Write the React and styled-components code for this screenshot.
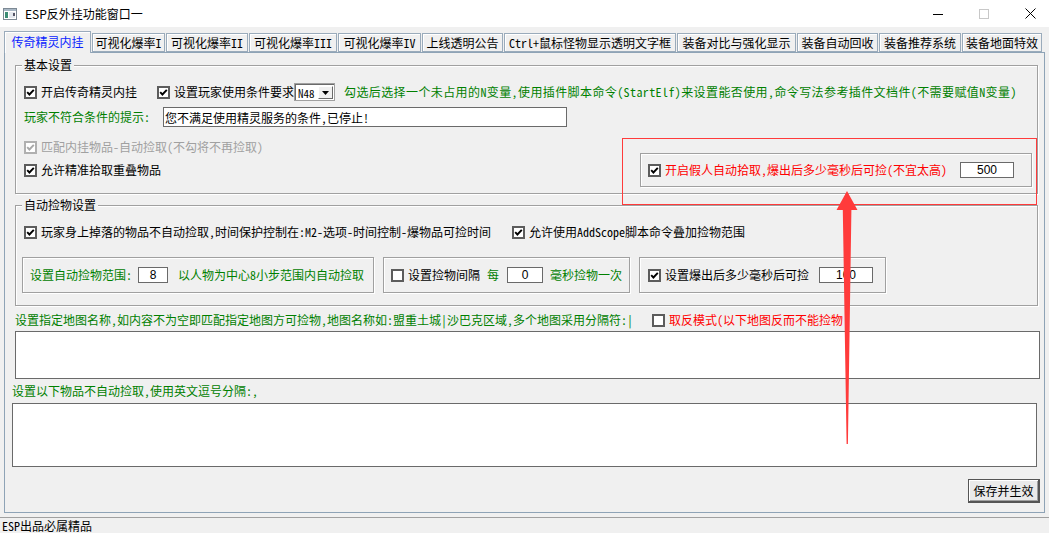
import React from 'react';
import styled, { createGlobalStyle } from 'styled-components';

const FONT = `"Noto Sans CJK SC", "Noto Sans", sans-serif`;

const Global = createGlobalStyle`
  html, body { margin: 0; padding: 0; background: #f0f0f0; }
  body { font-family: ${FONT}; font-size: 12px; color: #000; }
  * { box-sizing: border-box; }
`;

const Window = styled.div`
  position: relative;
  width: 1049px;
  height: 533px;
  overflow: hidden;
  background: #f0f0f0;
  display: flex;
  flex-direction: column;
  font-family: ${FONT};
  font-size: 12px;
  line-height: 14px;
  font-feature-settings: "hwid" 1;
`;

const TitleBar = styled.div`
  flex: none;
  height: 27px;
  background: #fff;
  display: flex;
  align-items: center;
  padding-left: 3px;
  font-feature-settings: normal;
`;

const TitleText = styled.span`
  margin-left: 8px;
  font-size: 12px;
  color: #000;
`;

const Controls = styled.div`
  margin-left: auto;
  margin-right: -4px;
  height: 100%;
  display: flex;
`;

const CtrlBtn = styled.div`
  width: 46px;
  height: 100%;
  display: flex;
  align-items: center;
  justify-content: center;
`;

const TabStrip = styled.div`
  flex: none;
  position: relative;
  z-index: 1;
  height: 26px;
  margin-bottom: -1px;
  padding-left: 4px;
  display: flex;
  align-items: flex-end;
`;

const Tab = styled.div`
  flex: none;
  width: ${(p) => p.$w}px;
  height: ${(p) => (p.$active ? 22 : 19)}px;
  margin-right: 1px;
  margin-bottom: ${(p) => (p.$active ? 0 : 1)}px;
  border: 1px solid #9aabbb;
  border-bottom: ${(p) => (p.$active ? 'none' : '1px solid #9aabbb')};
  box-shadow: inset 1px 1px 0 #fff;
  background: #f0f0f0;
  color: ${(p) => (p.$active ? '#0a1eff' : '#000')};
  display: flex;
  align-items: center;
  justify-content: center;
  white-space: nowrap;
  padding-bottom: ${(p) => (p.$active ? 1 : 0)}px;
`;

const Panel = styled.div`
  flex: none;
  margin-left: 4px;
  width: 1041px;
  height: 461px;
  border: 1px solid #8ea3b6;
  display: flex;
  flex-direction: column;
`;

const Group = styled.div`
  flex: none;
  margin: ${(p) => p.$mt}px 0 0 10px;
  width: 1023px;
  height: ${(p) => p.$h}px;
  border: 1px solid #a0a0a0;
  box-shadow: inset 1px 1px 0 #fff, 1px 1px 0 #fff;
  padding: 0 6px 0 8px;
  display: flex;
  flex-direction: column;
`;

const Caption = styled.div`
  align-self: flex-start;
  margin: -8px 0 0 -2px;
  padding: 0 2px;
  height: 14px;
  line-height: 14px;
  background: #f0f0f0;
`;

const Row = styled.div`
  flex: none;
  display: flex;
  align-items: center;
  height: ${(p) => p.$h || 20}px;
  margin-top: ${(p) => p.$mt || 0}px;
  margin-left: ${(p) => p.$ml || 0}px;
  white-space: nowrap;
`;

const SplitBlock = styled.div`
  flex: none;
  margin-top: ${(p) => p.$mt}px;
  display: flex;
  align-items: flex-start;
`;

const Column = styled.div`
  display: flex;
  flex-direction: column;
`;

const InnerBox = styled.div`
  flex: none;
  margin: ${(p) => p.$mt || 0}px ${(p) => p.$mr || 0}px 0 ${(p) => (p.$ml == null ? 'auto' : p.$ml + 'px')};
  width: ${(p) => p.$w}px;
  height: ${(p) => p.$h}px;
  border: 1px solid #a0a0a0;
  box-shadow: inset 1px 1px 0 #fff, 1px 1px 0 #fff;
  padding-left: ${(p) => p.$pl}px;
  display: flex;
  align-items: center;
  white-space: nowrap;
`;

const BoxRow = styled.div`
  flex: none;
  margin: ${(p) => p.$mt}px 0 0 -2px;
  display: flex;
  gap: 9px;
`;

const Text = styled.span`
  flex: none;
  color: ${(p) => p.$color || '#000'};
  margin-left: ${(p) => p.$ml || 0}px;
  width: ${(p) => (p.$w ? p.$w + 'px' : 'auto')};
  letter-spacing: ${(p) => p.$ls || 0}px;
  white-space: nowrap;
`;

const CheckLabel = styled.label`
  flex: none;
  display: inline-flex;
  align-items: center;
  gap: 4px;
  color: ${(p) => (p.$disabled ? '#a0a0a0' : p.$color || '#000')};
  width: ${(p) => (p.$w ? p.$w + 'px' : 'auto')};
  white-space: nowrap;
`;

const Box = styled.span`
  flex: none;
  width: 13px;
  height: 13px;
  border: 2px solid ${(p) => (p.$disabled ? '#b0b0b0' : '#5c5c5c')};
  background: #fff;
  display: flex;
  align-items: center;
  justify-content: center;
`;

const Field = styled.input`
  flex: none;
  width: ${(p) => p.$w}px;
  height: ${(p) => p.$h}px;
  margin-left: ${(p) => p.$ml || 0}px;
  border: 1px solid #6a6a6a;
  background: #fff;
  padding: 0 ${(p) => (p.$center ? 0 : 1)}px;
  text-align: ${(p) => (p.$center ? 'center' : 'left')};
  font-family: ${(p) => (p.$center ? `"Liberation Sans", Arial, sans-serif` : FONT)};
  font-size: 12px;
  font-feature-settings: "hwid" 1;
  color: #000;
  outline: none;
`;

const Combo = styled.div`
  flex: none;
  width: 41px;
  height: 18px;
  border: 1px solid #a0a0a0;
  box-shadow: inset 1px 1px 0 #6a6a6a;
  background: #fff;
  display: flex;
  padding: 2px 1px 1px 3px;
`;

const ComboText = styled.span`
  flex: 1;
  display: flex;
  align-items: center;
  font-size: 11px;
`;

const ComboBtn = styled.span`
  width: 15px;
  background: #f0f0f0;
  border: 1px solid;
  border-color: #fff #6a6a6a #6a6a6a #fff;
  display: flex;
  align-items: center;
  justify-content: center;
`;

const Area = styled.textarea`
  flex: none;
  display: block;
  margin: ${(p) => p.$mt}px 0 0 ${(p) => p.$ml}px;
  width: 1025px;
  height: ${(p) => p.$h}px;
  border: 1px solid #6a6a6a;
  background: #fff;
  resize: none;
  outline: none;
  font-family: ${FONT};
`;

const Button = styled.button`
  flex: none;
  align-self: flex-end;
  margin: 12px 4px 0 0;
  width: 72px;
  height: 24px;
  border: 1px solid #555;
  border-right-width: 2px;
  border-bottom-width: 2px;
  box-shadow: inset 1px 1px 0 #fff, inset -1px -1px 0 #a0a0a0;
  background: #eaeaea;
  font-family: ${FONT};
  font-size: 12px;
  color: #000;
  padding: 0;
`;

const StatusBar = styled.div`
  flex: 1;
  margin-top: 4px;
  border-top: 1px solid #a0a0a0;
  padding-left: 2px;
  display: flex;
  align-items: center;
`;

const Annotation = styled.div`
  position: absolute;
  left: 622px;
  top: 138px;
  width: 415px;
  height: 67px;
  border: 1px solid #ff3b3b;
  pointer-events: none;
`;

const ArrowWrap = styled.svg`
  position: absolute;
  left: 832px;
  top: 188px;
  pointer-events: none;
`;

const GREEN = '#008000';
const RED = '#ff0000';

function CheckMark({ disabled }) {
  return (
    <svg width="9" height="9" viewBox="0 0 9 9">
      <path d="M1.2 4.2 L3.4 6.5 L7.8 1.8" fill="none" stroke={disabled ? '#a8a8a8' : '#000'} strokeWidth="1.9" />
    </svg>
  );
}

function Check({ checked = true, disabled, color, w, children }) {
  return (
    <CheckLabel $color={color} $w={w} $disabled={disabled}>
      <Box $disabled={disabled}>{checked && <CheckMark disabled={disabled} />}</Box>
      <span>{children}</span>
    </CheckLabel>
  );
}

const tabs = [
  { label: '传奇精灵内挂', w: 87, active: true },
  { label: '可视化爆率I', w: 73 },
  { label: '可视化爆率II', w: 82 },
  { label: '可视化爆率III', w: 88 },
  { label: '可视化爆率IV', w: 83 },
  { label: '上线透明公告', w: 81 },
  { label: 'Ctrl+鼠标怪物显示透明文字框', w: 172 },
  { label: '装备对比与强化显示', w: 119 },
  { label: '装备自动回收', w: 81 },
  { label: '装备推荐系统', w: 82 },
  { label: '装备地面特效', w: 80 },
];

export default function App() {
  return (
    <>
      <Global />
      <Window>
        <TitleBar>
          <svg width="14" height="12" viewBox="0 0 14 12">
            <rect x="0.5" y="0.5" width="13" height="11" fill="#fff" stroke="#7d8994" />
            <rect x="1" y="1" width="12" height="2" fill="#a9b8c6" />
            <rect x="2" y="4" width="3" height="6" fill="#3c8c74" />
            <rect x="6" y="4" width="6" height="6" fill="#e4e8ee" />
            <rect x="10" y="5" width="2" height="3" fill="#556" />
          </svg>
          <TitleText>ESP反外挂功能窗口一</TitleText>
          <Controls>
            <CtrlBtn>
              <svg width="10" height="10" viewBox="0 0 10 10">
                <line x1="0" y1="5.5" x2="10" y2="5.5" stroke="#000" strokeWidth="1" />
              </svg>
            </CtrlBtn>
            <CtrlBtn>
              <svg width="10" height="10" viewBox="0 0 10 10">
                <rect x="0.5" y="0.5" width="9" height="9" fill="none" stroke="#c8c8c8" strokeWidth="1" />
              </svg>
            </CtrlBtn>
            <CtrlBtn>
              <svg width="11" height="11" viewBox="0 0 11 11">
                <path d="M0.5 0.5 L10.5 10.5 M10.5 0.5 L0.5 10.5" stroke="#000" strokeWidth="1" />
              </svg>
            </CtrlBtn>
          </Controls>
        </TitleBar>

        <TabStrip>
          {tabs.map((t) => (
            <Tab key={t.label} $w={t.w} $active={t.active}>
              {t.label}
            </Tab>
          ))}
        </TabStrip>

        <Panel>
          <Group $mt={12} $h={129}>
            <Caption>基本设置</Caption>
            <Row $mt={10}>
              <Check w={133}>开启传奇精灵内挂</Check>
              <Check w={137}>设置玩家使用条件要求</Check>
              <Combo>
                <ComboText>N48</ComboText>
                <ComboBtn>
                  <svg width="7" height="4" viewBox="0 0 7 4">
                    <path d="M0 0 L7 0 L3.5 4 Z" fill="#000" />
                  </svg>
                </ComboBtn>
              </Combo>
              <Text $color={GREEN} $ml={9} $ls={0.4}>
                勾选后选择一个未占用的N变量,使用插件脚本命令(StartElf)来设置能否使用,命令写法参考插件文档件(不需要赋值N变量)
              </Text>
            </Row>
            <Row $mt={5}>
              <Text $color={GREEN} $w={139}>玩家不符合条件的提示:</Text>
              <Field $w={404} $h={20} readOnly value="您不满足使用精灵服务的条件,已停止!" />
            </Row>
            <SplitBlock $mt={10}>
              <Column>
                <Row>
                  <Check disabled>匹配内挂物品-自动捡取(不勾将不再捡取)</Check>
                </Row>
                <Row $mt={3}>
                  <Check>允许精准拾取重叠物品</Check>
                </Row>
              </Column>
              <InnerBox $mt={16} $mr={-1} $w={392} $h={34} $pl={7}>
                <Check color={RED} w={299}>开启假人自动拾取,爆出后多少毫秒后可捡(不宜太高)</Check>
                <Field $w={54} $h={16} $ml={13} $center readOnly value="500" />
              </InnerBox>
            </SplitBlock>
          </Group>

          <Group $mt={11} $h={101}>
            <Caption>自动捡物设置</Caption>
            <Row $mt={10}>
              <Check w={488}>玩家身上掉落的物品不自动捡取,时间保护控制在:M2-选项-时间控制-爆物品可捡时间</Check>
              <Check>允许使用AddScope脚本命令叠加捡物范围</Check>
            </Row>
            <BoxRow $mt={15}>
              <InnerBox $ml={0} $w={352} $h={36} $pl={7}>
                <Text $color={GREEN} $w={108}>设置自动捡物范围:</Text>
                <Field $w={30} $h={16} $center readOnly value="8" />
                <Text $color={GREEN} $ml={10}>以人物为中心8小步范围内自动捡取</Text>
              </InnerBox>
              <InnerBox $ml={0} $w={247} $h={36} $pl={7}>
                <Check checked={false} w={96}>设置捡物间隔</Check>
                <Text $color={GREEN} $w={20}>每</Text>
                <Field $w={36} $h={16} $center readOnly value="0" />
                <Text $color={GREEN} $ml={7}>毫秒捡物一次</Text>
              </InnerBox>
              <InnerBox $ml={0} $w={247} $h={36} $pl={8}>
                <Check w={171}>设置爆出后多少毫秒后可捡</Check>
                <Field $w={54} $h={16} $center readOnly value="100" />
              </InnerBox>
            </BoxRow>
          </Group>

          <Row $h={14} $mt={7} $ml={10}>
            <Text $color={GREEN} $w={637}>
              设置指定地图名称,如内容不为空即匹配指定地图方可捡物,地图名称如:盟重土城|沙巴克区域,多个地图采用分隔符:|
            </Text>
            <Check checked={false} color={RED}>取反模式(以下地图反而不能捡物</Check>
          </Row>
          <Area $mt={4} $ml={10} $h={48} readOnly />
          <Row $h={14} $mt={5} $ml={7}>
            <Text $color={GREEN}>设置以下物品不自动捡取,使用英文逗号分隔:,</Text>
          </Row>
          <Area $mt={5} $ml={7} $h={64} readOnly />
          <Button>保存并生效</Button>
        </Panel>

        <StatusBar>ESP出品必属精品</StatusBar>

        <Annotation />
        <ArrowWrap width="30" height="260" viewBox="0 0 30 260">
          <path
            d="M15 3 L25.5 22 L19.4 22 L15.9 256 L14.6 256 L10.8 22 L4.5 22 Z"
            fill="#ff3b3b"
          />
        </ArrowWrap>
      </Window>
    </>
  );
}
